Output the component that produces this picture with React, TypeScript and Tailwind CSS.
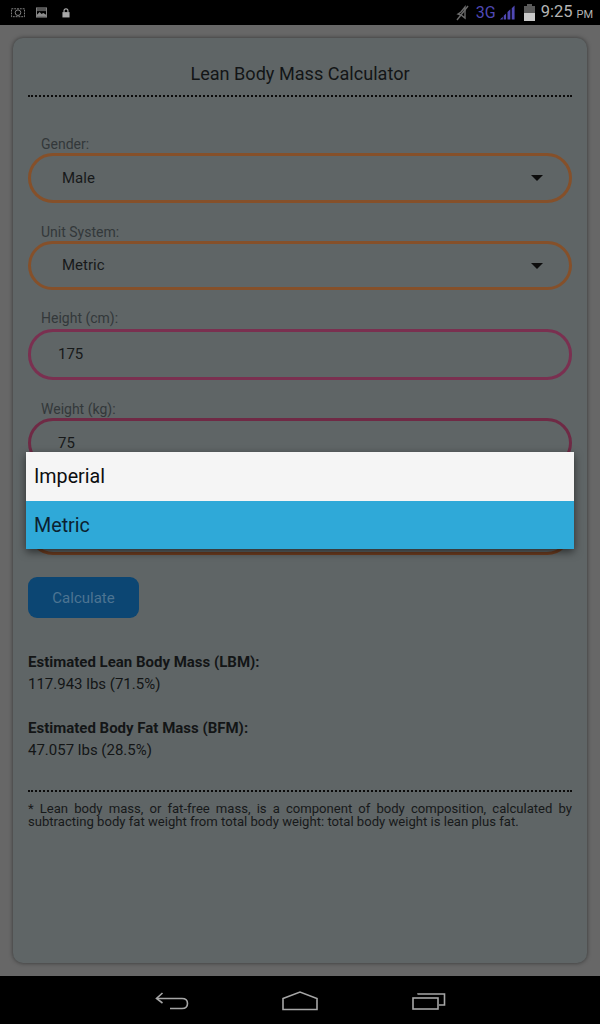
const font = "font-['Roboto',_'Liberation_Sans',_sans-serif]";

function Field({ label, value, color, select, mt, h, gap = "mt-[1px]", pl = "pl-[31px]" }: { label: string; value: string; color: string; select?: boolean; mt: string; h: string; gap?: string; pl?: string }) {
  return (
    <div className={mt}>
      <div className="ml-[13px] text-[14px] leading-[16px] text-[#33383a]">{label}</div>
      <div className={`${gap} flex items-center justify-between rounded-[25px] border-[3px] ${h} ${pl} pr-[26px] text-[15px] text-[#17191a] ${color}`}>
        <span>{value}</span>
        {select && <span className="h-0 w-0 border-x-[6px] border-t-[6px] border-x-transparent border-t-[#0d0d0d]" />}
      </div>
    </div>
  );
}

function StatusBar() {
  return (
    <div className="flex h-[25px] items-center justify-between bg-black pl-[11px] pr-[7px]">
      <div className="flex items-center gap-[11px] text-[#8c8c8c]">
        <svg width="14" height="11" viewBox="0 0 15 11" fill="none" stroke="currentColor" strokeWidth="1">
          <rect x="0.5" y="1.5" width="14" height="8.5" strokeDasharray="2 1" />
          <circle cx="7.5" cy="5.7" r="3" />
        </svg>
        <svg width="11" height="11" viewBox="0 0 12 11">
          <rect x="0.5" y="0.5" width="11" height="10" fill="none" stroke="currentColor" />
          <path d="M1 8 L4 5 L6 7 L8 6 L11 8 V10 H1 Z" fill="currentColor" />
          <rect x="1" y="1" width="10" height="3" fill="currentColor" opacity="0.6" />
        </svg>
        <svg width="8" height="10" viewBox="0 0 9 11" className="ml-[4px]">
          <rect x="0.5" y="4.5" width="8" height="6" fill="#a8a8a8" />
          <path d="M2.3 5 V3 a2.2 2.2 0 0 1 4.4 0 V5" fill="none" stroke="#a8a8a8" strokeWidth="1.3" />
        </svg>
      </div>
      <div className="flex items-center">
        <svg width="14" height="16" viewBox="0 0 14 16" fill="none" stroke="#6a6a6a" strokeWidth="1.4" className="mr-[6px]">
          <path d="M2 9 L5 7 L9 2 V13 L5 10 Z" />
          <path d="M1 15 L12 1" />
        </svg>
        <span className="text-[16px] leading-none text-[#4f48b4]">3G</span>
        <svg width="17" height="16" viewBox="0 0 18 16" className="ml-[3px]" fill="#4f48b4">
          <path d="M1 15 L4 12 V15 Z" />
          <path d="M5 15 V11 L7.5 8.5 V15 Z" />
          <path d="M9 15 V7 L12 4 V15 Z" />
          <path d="M13.5 15 V3 L16.5 0 V15 Z" />
        </svg>
        <svg width="11" height="18" viewBox="0 0 11 18" className="ml-[8px]">
          <rect x="3" y="0" width="5" height="2" fill="#5a5a5a" />
          <rect x="0" y="2" width="11" height="7" fill="#5a5a5a" />
          <rect x="0" y="9" width="11" height="8" fill="#c9c9c9" />
        </svg>
        <span className="ml-[6px] text-[16.5px] leading-none text-[#b4b4b4]">9:25</span>
        <span className="ml-[4px] mt-[3px] text-[11px] leading-none text-[#b4b4b4]">PM</span>
      </div>
    </div>
  );
}

function NavBar() {
  return (
    <div className="flex h-[48px] items-center justify-center bg-black text-[#a6a6a6]">
      <svg width="34" height="20" viewBox="0 0 34 20" fill="none" stroke="currentColor" strokeWidth="1.6" className="mt-[1px]">
        <path d="M7.5 2 L1.5 7.5 L7.5 12" />
        <path d="M2 7.5 H27 Q32.5 7.5 32.5 12.5 Q32.5 17.5 27 17.5 H15" />
      </svg>
      <svg width="36" height="20" viewBox="0 0 36 20" fill="none" stroke="currentColor" strokeWidth="1.6" className="ml-[93px] mt-[1px]">
        <path d="M1 7.5 L18 1 L35 7.5 V18.5 H1 Z" />
      </svg>
      <svg width="34" height="18" viewBox="0 0 34 18" fill="none" stroke="currentColor" strokeWidth="1.6" className="ml-[94px] mt-[1px]">
        <rect x="1" y="6" width="25" height="11" />
        <path d="M6 2.5 L6 2 H32.5 V13 H27" />
      </svg>
    </div>
  );
}

export default function App() {
  return (
    <div className={`relative h-[1024px] w-[600px] overflow-hidden bg-[#676767] ${font}`}>
      <StatusBar />
      <div className="h-[951px] px-[13px] pb-[13px] pt-[13px]">
        <div className="h-[925px] rounded-[10px] bg-[#5f6566] px-[15px] shadow-[0_0_4px_rgba(0,0,0,0.5)]">
          <h1 className="mt-0 pt-[24px] text-center text-[18.1px] leading-[24px] text-[#131516]">Lean Body Mass Calculator</h1>
          <div className="mt-[9px] border-t-2 border-dotted border-[#0c0c0c]" />
          <Field mt="mt-[39px]" label="Gender:" value="Male" color="border-[#85502a]" h="h-[50px]" select />
          <Field mt="mt-[21px]" label="Unit System:" value="Metric" color="border-[#85502a]" h="h-[49px]" select />
          <Field mt="mt-[20px]" gap="mt-[3px]" label="Height (cm):" value="175" color="border-[#7a3050]" h="h-[51px]" pl="pl-[27px]" />
          <Field mt="mt-[21px]" label="Weight (kg):" value="75" color="border-[#6f2a45]" h="h-[50px]" pl="pl-[27px]" />
          <div className="mt-[37px] h-[50px] rounded-[25px] border-[3px] border-[#6d3d20]" />
          <button className="mt-[22px] block h-[41px] w-[111px] rounded-[9px] bg-[#0c4673] pt-[1px] text-[15px] text-[#4d7492]">Calculate</button>
          <div className="mt-[34px] text-[15px] leading-[20px] text-[#131516]">
            <div className="font-bold">Estimated Lean Body Mass (LBM):</div>
            <div className="mt-[2px]">117.943 lbs (71.5%)</div>
            <div className="mt-[24px] font-bold">Estimated Body Fat Mass (BFM):</div>
            <div className="mt-[2px]">47.057 lbs (28.5%)</div>
          </div>
          <div className="mt-[30px] border-t-2 border-dotted border-[#0c0c0c]" />
          <p className="mt-[10px] text-justify text-[13.1px] leading-[13px] text-[#17191a]">* Lean body mass, or fat-free mass, is a component of body composition, calculated by subtracting body fat weight from total body weight: total body weight is lean plus fat.</p>
        </div>
      </div>
      <NavBar />
      <div className="absolute left-[26px] top-[452px] w-[548px] rounded-[2px] text-[19.7px] leading-[50px] text-[#0c0e10] shadow-[0_3px_8px_rgba(0,0,0,0.55)]">
        <div className="h-[49px] bg-[#f5f5f5] pl-[8px]">Imperial</div>
        <div className="h-[48px] bg-[#2fa9d8] pl-[8px] text-[#0c2230]">Metric</div>
      </div>
    </div>
  );
}
